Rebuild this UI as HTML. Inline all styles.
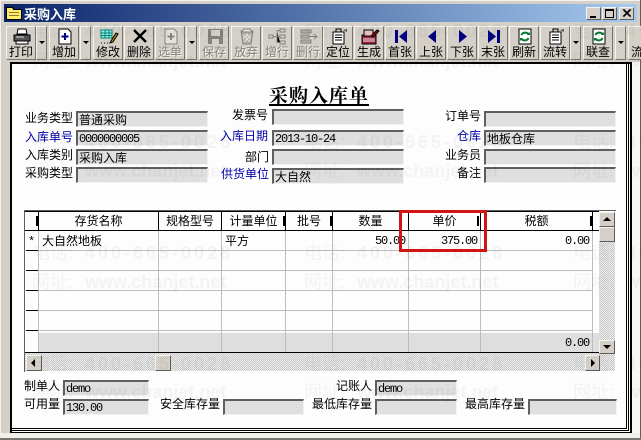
<!DOCTYPE html>
<html><head><meta charset="utf-8"><style>
html,body{margin:0;padding:0;width:641px;height:440px;overflow:hidden;background:#d4d0c8}
*{box-sizing:border-box}
body{font:12px/14px "WenQuanYi Zen Hei","Noto Sans CJK SC",sans-serif;color:#000;position:relative}
div,span.a{position:absolute}
.btn{top:26px;height:34px;width:30px;background:#d4d0c8;border:1px solid;border-color:#f4f3ef #77756f #77756f #f4f3ef;text-align:center}
.btn b{position:absolute;left:0;right:0;top:18px;font-weight:400;font-size:12px;line-height:14px;white-space:nowrap;letter-spacing:0}
.btn.d b{color:#84827c;text-shadow:1px 1px 0 #f4f3ef}
.btn svg{position:absolute;left:5px;top:1px;width:20px;height:17px}
.dd{top:26px;height:34px;width:11px;background:#d4d0c8;border:1px solid;border-color:#f4f3ef #77756f #77756f #f4f3ef}
.dd i{position:absolute;left:2px;top:14px;width:0;height:0;border:3px solid transparent;border-top:3px solid #000;border-bottom:0}
.f{background:#dfdfdf;border:1px solid;border-color:#5f5f5f #f2f2f2 #f2f2f2 #5f5f5f;border-width:2px 1px 1px 2px;height:16px;padding-left:1px;line-height:14px;white-space:nowrap;overflow:hidden}
.m{font-family:"Liberation Mono",monospace;font-size:12px;letter-spacing:-1.2px}
.l{white-space:nowrap;line-height:14px;height:14px}
.bl{color:#0000a8}
.w{color:#f5f5f5;mix-blend-mode:multiply;font:700 18px/22px "Liberation Sans",sans-serif;white-space:nowrap}
.w span{display:inline-block;width:53px;font:400 18px/22px "Noto Sans CJK SC",sans-serif}
.w.p{letter-spacing:3px}
.w.p span{letter-spacing:0}
.c3{left:573px;width:68px;overflow:hidden}
.v{top:211px;width:1px;background:#bdbdbd;height:141px}
.h{left:39px;width:553px;height:1px;background:#bdbdbd}
.hd{top:213px;height:16px;text-align:center;line-height:16px;white-space:nowrap;font-size:12px}
.sb{background:#d4d0c8;border:1px solid;border-color:#f4f3ef #5f5d58 #5f5d58 #f4f3ef}
.hat{background-color:#eee;background-image:linear-gradient(45deg,#c8c8c8 25%,transparent 25%,transparent 75%,#c8c8c8 75%),linear-gradient(45deg,#c8c8c8 25%,transparent 25%,transparent 75%,#c8c8c8 75%);background-size:2px 2px;background-position:0 0,1px 1px}
</style></head><body>
<!-- outer frame -->
<div style="left:0;top:0;width:641px;height:440px;background:#d4d0c8"></div>
<div style="left:0;top:0;width:641px;height:1px;background:#f4f3ef"></div>
<div style="left:0;top:0;width:1px;height:440px;background:#f4f3ef"></div>
<div style="left:640px;top:0;width:1px;height:440px;background:#5f5f5f"></div>
<div style="left:0;top:438px;width:641px;height:2px;background:#77756f"></div>
<!-- title bar -->
<div style="left:4px;top:4px;width:633px;height:18px;background:linear-gradient(90deg,#0a246a,#a6caf0)"></div>
<svg style="position:absolute;left:6px;top:6px" width="16" height="14" viewBox="0 0 16 14"><path d="M.500 1.500h6l1 2h8v10H.500z" fill="#ffec6e" stroke="#000"/><path d="M3 6.500h10M3 9.500h10" stroke="#8a7a30"/></svg>
<div style="left:24px;top:6px;color:#fff;font-size:13px;font-weight:700;line-height:15px;white-space:nowrap">采购入库</div>
<div class="sb" style="left:586px;top:7px;width:15px;height:13px"><span class="a" style="left:3px;top:8px;width:6px;height:2px;background:#000"></span></div>
<div class="sb" style="left:602px;top:7px;width:15px;height:13px"><span class="a" style="left:2px;top:1px;width:9px;height:9px;border:1px solid #000;border-top-width:2px"></span></div>
<div class="sb" style="left:619px;top:7px;width:15px;height:13px"><svg style="position:absolute;left:2px;top:1px" width="10" height="9" viewBox="0 0 10 9"><path d="M1 .5l7 7M2 .5l7 7M8 .5l-7 7M9 .5l-7 7" stroke="#000" stroke-width="1"/></svg></div>

<!-- toolbar -->
<div class="btn" style="left:6px"><svg viewBox="0 0 20 17"><path d="M6 1h8l1 5H5z" fill="#fff" stroke="#000"/><path d="M2 7h16v6H2z" fill="#555" stroke="#000"/><path d="M4 13h12v3H4z" fill="#fff" stroke="#000"/><path d="M4 9h8" stroke="#ddd"/></svg><b>打印</b></div>
<div class="dd" style="left:36px"><i></i></div>
<div class="btn" style="left:49px"><svg viewBox="0 0 20 17"><path d="M4 1h9l3 3v12H4z" fill="#fff" stroke="#000"/><path d="M10 5v7M6.500 8.500h7" stroke="#000080" stroke-width="2"/></svg><b>增加</b></div>
<div class="dd" style="left:80px"><i></i></div>
<div class="btn" style="left:93px"><svg viewBox="0 0 20 17"><path d="M2 2h11v8H2z" fill="#9ee" stroke="#087"/><path d="M2 5h11M2 7.500h11M6 2v8M10 2v8" stroke="#087"/><path d="M12 13l5-8 2 1-5 8-3 1z" fill="#b80" stroke="#000"/><path d="M2 15h1M5 15h1M8 15h1" stroke="#000"/></svg><b>修改</b></div>
<div class="btn" style="left:124px"><svg viewBox="0 0 20 17"><path d="M4 2l12 12M16 2L4 14" stroke="#000" stroke-width="2.400"/></svg><b>删除</b></div>
<div class="btn d" style="left:155px"><svg viewBox="0 0 20 17"><path d="M4 1h9l3 3v12H4z" fill="#e4e2dc" stroke="#84827c"/><path d="M10 5v7M6.500 8.500h7" stroke="#84827c" stroke-width="2"/></svg><b>选单</b></div>
<div class="dd" style="left:186px"><i></i></div>
<div class="btn d" style="left:199px"><svg viewBox="0 0 20 17"><path d="M3 1h15v15H3z" fill="#84827c"/><path d="M6 2h9v6H6z" fill="#d4d0c8"/><path d="M7 11h7v5H7z" fill="#d4d0c8"/></svg><b>保存</b></div>
<div class="btn d" style="left:231px"><svg viewBox="0 0 20 17"><path d="M4 3h12l-2 13H6z" fill="#b0aea8" stroke="#84827c"/><path d="M7 1h6l2 3H5z" fill="#e4e2dc" stroke="#84827c"/><path d="M6 7l7 7M9 6l5 5M14 7l-7 7M11 6l-5 5" stroke="#e4e2dc"/></svg><b>放弃</b></div>
<div class="btn d" style="left:262px"><svg viewBox="0 0 20 17"><path d="M1 7h4v3H1zM12 1h5v3h-5zM12 7h5v3h-5zM12 13h5v3h-5z" fill="none" stroke="#84827c"/><path d="M5 8.500h7M9 2.500v12h3M9 2.500h3" stroke="#84827c"/></svg><b>增行</b></div>
<div class="btn d" style="left:293px"><svg viewBox="0 0 20 17"><path d="M2 2h10v3H2zM2 12h10v3H2zM2 7h8v3H2z" fill="#b0aea8" stroke="#84827c"/><path d="M10 8.500h8M15 6l3 2.500-3 2.500" fill="none" stroke="#84827c"/></svg><b>删行</b></div>
<div class="btn" style="left:323px"><svg viewBox="0 0 20 17"><path d="M4 4h11v12H4z" fill="#fff" stroke="#000"/><path d="M7 1h5v3H7z" fill="#ccc" stroke="#000"/><path d="M6 7h7M6 9.500h7M6 12h7" stroke="#000"/><path d="M14 2l4-1v3z" fill="#555"/></svg><b>定位</b></div>
<div class="btn" style="left:354px"><svg viewBox="0 0 20 17"><path d="M2 7h14v9H2z" fill="#a02050" stroke="#000"/><path d="M4 2h9v6H4z" fill="#e8c0c0" stroke="#000"/><path d="M11 8l6-6 2 1-6 6z" fill="#c00" stroke="#000"/><path d="M3 11h12M3 13h12" stroke="#eec"/></svg><b>生成</b></div>
<div class="btn" style="left:385px"><svg viewBox="0 0 20 17"><path d="M4 2h3v13H4zM16 2v13L8 8.500z" fill="#000080"/></svg><b>首张</b></div>
<div class="btn" style="left:416px"><svg viewBox="0 0 20 17"><path d="M14 2v13L6 8.500z" fill="#000080"/></svg><b>上张</b></div>
<div class="btn" style="left:447px"><svg viewBox="0 0 20 17"><path d="M6 2v13l8-6.500z" fill="#000080"/></svg><b>下张</b></div>
<div class="btn" style="left:478px"><svg viewBox="0 0 20 17"><path d="M4 2v13l8-6.500zM13 2h3v13h-3z" fill="#000080"/></svg><b>末张</b></div>
<div class="btn" style="left:509px"><svg viewBox="0 0 20 17"><path d="M4 1h12v15H4z" fill="#fff" stroke="#000"/><path d="M6.500 7a4 3.500 0 0 1 7-1M13.500 10a4 3.500 0 0 1-7 1" fill="none" stroke="#087830" stroke-width="2"/><path d="M12 7h3V4zM8 10H5v3z" fill="#087830"/></svg><b>刷新</b></div>
<div class="btn" style="left:540px"><svg viewBox="0 0 20 17"><path d="M4 4h11v12H4z" fill="#fff" stroke="#000"/><path d="M7 1h5v3H7z" fill="#ccc" stroke="#000"/><path d="M6 7h7M6 9.500h7M6 12h7" stroke="#000"/><path d="M14 2l4-1v3z" fill="#555"/></svg><b>流转</b></div>
<div class="dd" style="left:570px"><i></i></div>
<div class="btn" style="left:583px"><svg viewBox="0 0 20 17"><path d="M4 1h12v15H4z" fill="#fff" stroke="#000"/><path d="M6.500 7a4 3.500 0 0 1 7-1M13.500 10a4 3.500 0 0 1-7 1" fill="none" stroke="#087830" stroke-width="2"/><path d="M12 7h3V4zM8 10H5v3z" fill="#087830"/></svg><b>联查</b></div>
<div class="dd" style="left:615px"><i></i></div>
<div class="btn" style="left:628px;width:13px;overflow:hidden;border-right:0"><b style="left:2px;right:auto;width:10px;overflow:hidden;text-align:left">流</b></div>

<!-- form frame -->
<div style="left:10px;top:62px;width:622px;height:371px;background:#fff;border-left:2px solid #000;border-top:2px solid #000"></div>
<div style="left:626px;top:63px;width:1px;height:366px;background:#000"></div>
<div style="left:628px;top:63px;width:1px;height:368px;background:#000"></div>
<div style="left:630px;top:63px;width:2px;height:370px;background:#000"></div>
<div style="left:12px;top:428px;width:615px;height:1px;background:#000"></div>
<div style="left:12px;top:430px;width:617px;height:1px;background:#000"></div>
<div style="left:12px;top:432px;width:620px;height:1px;background:#000"></div>
<div style="left:632px;top:62px;width:8px;height:376px;background:#f7f7f3"></div>
<div style="left:0;top:433px;width:640px;height:5px;background:#f0efea"></div>
<div style="left:12px;top:64px;width:614px;height:364px;background:#fdfdfd"></div>

<!-- title -->
<div style="left:269px;top:84px;font:700 19px/22px 'Noto Serif CJK SC',serif;letter-spacing:1px;white-space:nowrap;border-bottom:2px solid #000;height:22px;width:100px;overflow:hidden">采购入库单</div>

<!-- labels -->
<div class="l" style="left:25px;top:111px">业务类型</div>
<div class="l bl" style="left:25px;top:130px">入库单号</div>
<div class="l" style="left:25px;top:148px">入库类别</div>
<div class="l" style="left:25px;top:166px">采购类型</div>
<div class="l" style="left:232px;top:108px">发票号</div>
<div class="l bl" style="left:220px;top:129px">入库日期</div>
<div class="l" style="left:245px;top:150px">部门</div>
<div class="l bl" style="left:221px;top:167px">供货单位</div>
<div class="l" style="left:445px;top:109px">订单号</div>
<div class="l bl" style="left:457px;top:129px">仓库</div>
<div class="l" style="left:445px;top:148px">业务员</div>
<div class="l" style="left:457px;top:166px">备注</div>

<!-- fields -->
<div class="f" style="left:76px;top:111px;width:132px">普通采购</div>
<div class="f m" style="left:76px;top:130px;width:132px">0000000005</div>
<div class="f" style="left:76px;top:149px;width:132px">采购入库</div>
<div class="f" style="left:76px;top:167px;width:132px"></div>
<div class="f" style="left:272px;top:109px;width:132px"></div>
<div class="f m" style="left:272px;top:130px;width:132px">2013-10-24</div>
<div class="f" style="left:272px;top:149px;width:132px"></div>
<div class="f" style="left:272px;top:168px;width:132px">大自然</div>
<div class="f" style="left:484px;top:111px;width:132px"></div>
<div class="f" style="left:484px;top:130px;width:132px">地板仓库</div>
<div class="f" style="left:484px;top:149px;width:132px"></div>
<div class="f" style="left:484px;top:167px;width:132px"></div>

<!-- grid -->
<div style="left:24px;top:210px;width:592px;height:162px;background:transparent;border:1px solid;border-color:#5f5f5f #f2f2f2 #f2f2f2 #5f5f5f;border-width:1px 0 0 1px"></div>
<div style="left:25px;top:211px;width:574px;height:1px;background:#000"></div>
<div style="left:25px;top:230px;width:574px;height:1px;background:#000"></div>
<div style="left:39px;top:333px;width:560px;height:19px;background:#dedede"></div>
<div class="h" style="top:250px"></div><div class="h" style="top:270px"></div><div class="h" style="top:290px"></div><div class="h" style="top:310px"></div><div class="h" style="top:330px"></div>
<div class="v" style="left:38px;background:#bdbdbd"></div>
<div class="v" style="left:158px"></div><div class="v" style="left:221px"></div><div class="v" style="left:285px"></div><div class="v" style="left:332px"></div><div class="v" style="left:408px"></div><div class="v" style="left:480px"></div><div class="v" style="left:592px"></div>
<div style="left:38px;top:211px;width:1px;height:20px;background:#000"></div>
<div style="left:158px;top:211px;width:1px;height:20px;background:#000"></div>
<div style="left:221px;top:211px;width:1px;height:20px;background:#000"></div>
<div style="left:285px;top:211px;width:1px;height:20px;background:#000"></div>
<div style="left:332px;top:211px;width:1px;height:20px;background:#000"></div>
<div style="left:408px;top:211px;width:1px;height:20px;background:#000"></div>
<div style="left:480px;top:211px;width:1px;height:20px;background:#000"></div>
<div style="left:592px;top:211px;width:1px;height:20px;background:#000"></div>
<div style="left:36px;top:216px;width:2px;height:10px;background:#000"></div>
<div style="left:283px;top:216px;width:2px;height:10px;background:#000"></div>
<div style="left:330px;top:216px;width:2px;height:10px;background:#000"></div>
<div style="left:477px;top:216px;width:2px;height:10px;background:#000"></div>
<div style="left:590px;top:216px;width:2px;height:10px;background:#000"></div>
<div style="left:26px;top:250px;width:12px;height:1px;background:#000"></div>
<div style="left:26px;top:270px;width:12px;height:1px;background:#000"></div>
<div style="left:26px;top:290px;width:12px;height:1px;background:#000"></div>
<div style="left:26px;top:310px;width:12px;height:1px;background:#000"></div>
<div style="left:26px;top:330px;width:12px;height:1px;background:#000"></div>
<div class="hd" style="left:39px;width:119px">存货名称</div>
<div class="hd" style="left:159px;width:62px">规格型号</div>
<div class="hd" style="left:222px;width:63px">计量单位</div>
<div class="hd" style="left:286px;width:46px">批号</div>
<div class="hd" style="left:333px;width:75px">数量</div>
<div class="hd" style="left:409px;width:71px">单价</div>
<div class="hd" style="left:481px;width:111px">税额</div>
<div class="l m" style="left:28px;top:235px">*</div>
<div class="l" style="left:42px;top:234px">大自然地板</div>
<div class="l" style="left:225px;top:234px">平方</div>
<div class="l m" style="left:339px;top:234px;width:66px;text-align:right">50.00</div>
<div class="l m" style="left:409px;top:234px;width:68px;text-align:right">375.00</div>
<div class="l m" style="left:499px;top:234px;width:90px;text-align:right">0.00</div>
<div class="l m" style="left:499px;top:336px;width:90px;text-align:right">0.00</div>
<div style="left:25px;top:352px;width:574px;height:1px;background:#000"></div>

<!-- scrollbars -->
<div class="hat" style="left:25px;top:353px;width:590px;height:18px"></div>
<div class="hat" style="left:599px;top:212px;width:16px;height:141px"></div>
<div class="sb" style="left:599px;top:212px;width:16px;height:15px"><span class="a" style="left:3px;top:4px;width:0;height:0;border:4px solid transparent;border-bottom:4px solid #000;border-top:0"></span></div>
<div class="sb" style="left:599px;top:227px;width:16px;height:15px"></div>
<div class="sb" style="left:599px;top:340px;width:16px;height:14px"><span class="a" style="left:3px;top:4px;width:0;height:0;border:4px solid transparent;border-top:4px solid #000;border-bottom:0"></span></div>
<div class="sb" style="left:26px;top:355px;width:16px;height:16px"><span class="a" style="left:4px;top:3px;width:0;height:0;border:4px solid transparent;border-right:4px solid #000;border-left:0"></span></div>
<div class="sb" style="left:155px;top:355px;width:16px;height:16px"></div>
<div class="sb" style="left:585px;top:355px;width:15px;height:16px"><span class="a" style="left:5px;top:3px;width:0;height:0;border:4px solid transparent;border-left:4px solid #000;border-right:0"></span></div>

<!-- red box -->
<div style="left:399px;top:210px;width:88px;height:42px;border:3px solid #d41414"></div>

<!-- bottom -->
<div class="l" style="left:24px;top:379px">制单人</div>
<div class="l" style="left:24px;top:397px">可用量</div>
<div class="l" style="left:160px;top:397px">安全库存量</div>
<div class="l" style="left:336px;top:379px">记账人</div>
<div class="l" style="left:312px;top:397px">最低库存量</div>
<div class="l" style="left:465px;top:397px">最高库存量</div>
<div class="f m" style="left:63px;top:380px;width:86px">demo</div>
<div class="f m" style="left:63px;top:399px;width:86px">130.00</div>
<div class="f" style="left:223px;top:399px;width:81px"></div>
<div class="f m" style="left:375px;top:380px;width:82px">demo</div>
<div class="f" style="left:375px;top:399px;width:82px"></div>
<div class="f" style="left:528px;top:399px;width:89px"></div>

<!-- watermark overlay -->
<div class="w p" style="left:32px;top:19px"><span>电话:</span>400-665-0028</div>
<div class="w p" style="left:304px;top:19px"><span>电话:</span>400-665-0028</div>
<div class="w p c3" style="top:19px"><span>电话:</span>400</div>
<div class="w" style="left:32px;top:49px"><span>网址:</span>www.chanjet.net</div>
<div class="w" style="left:304px;top:49px"><span>网址:</span>www.chanjet.net</div>
<div class="w c3" style="top:49px"><span>网址:</span>www</div>
<div class="w p" style="left:32px;top:130px"><span>电话:</span>400-665-0028</div>
<div class="w p" style="left:304px;top:130px"><span>电话:</span>400-665-0028</div>
<div class="w p c3" style="top:130px"><span>电话:</span>400</div>
<div class="w" style="left:32px;top:159px"><span>网址:</span>www.chanjet.net</div>
<div class="w" style="left:304px;top:159px"><span>网址:</span>www.chanjet.net</div>
<div class="w c3" style="top:159px"><span>网址:</span>www</div>
<div class="w p" style="left:32px;top:241px"><span>电话:</span>400-665-0028</div>
<div class="w p" style="left:304px;top:241px"><span>电话:</span>400-665-0028</div>
<div class="w p c3" style="top:241px"><span>电话:</span>400</div>
<div class="w" style="left:32px;top:270px"><span>网址:</span>www.chanjet.net</div>
<div class="w" style="left:304px;top:270px"><span>网址:</span>www.chanjet.net</div>
<div class="w c3" style="top:270px"><span>网址:</span>www</div>
<div class="w p" style="left:32px;top:352px"><span>电话:</span>400-665-0028</div>
<div class="w p" style="left:304px;top:352px"><span>电话:</span>400-665-0028</div>
<div class="w p c3" style="top:352px"><span>电话:</span>400</div>
<div class="w" style="left:32px;top:380px"><span>网址:</span>www.chanjet.net</div>
<div class="w" style="left:304px;top:380px"><span>网址:</span>www.chanjet.net</div>
<div class="w c3" style="top:380px"><span>网址:</span>www</div>
</body></html>
